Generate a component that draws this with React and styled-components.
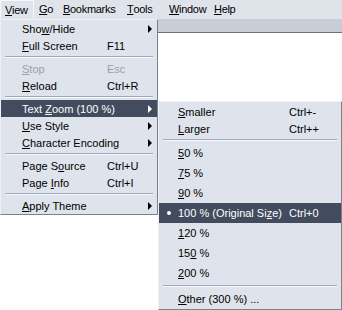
import React from 'react';
import styled, { createGlobalStyle, css } from 'styled-components';

const Global = createGlobalStyle`
  html, body { margin: 0; padding: 0; background: #fff; }
  body {
    font-family: "Liberation Sans", Arial, sans-serif;
    font-size: 11px;
    color: #000;
    overflow: hidden;
  }
`;

const Window = styled.div`
  position: relative;
  width: 342px;
  height: 310px;
  background: #fff;
  overflow: hidden;
`;

const MenuBar = styled.div`
  display: flex;
  height: 19px;
  background: #dfe3ea;
  letter-spacing: -0.3px;
`;

const BarItem = styled.div`
  display: flex;
  align-items: center;
  height: 18px;
  width: ${(p) => (p.$w ? `${p.$w}px` : 'auto')};
  box-sizing: border-box;
  padding: 0 0 0 4px;
  border-left: 1px solid transparent;
  border-right: 1px solid transparent;
  white-space: nowrap;
  ${(p) =>
    p.$active &&
    css`
      border-left-color: #f6f8fb;
      border-right-color: #f6f8fb;
      border-top: 1px solid #f6f8fb;
    `}
`;

const Toolbar = styled.div`
  height: 13px;
  background: #c8ced8;
  border-bottom: 1px solid #6c727c;
`;

const Menu = styled.div`
  position: absolute;
  left: ${(p) => p.$x}px;
  top: ${(p) => p.$y}px;
  width: ${(p) => p.$w}px;
  box-sizing: border-box;
  background: #dfe3eb;
  border: 1px solid;
  border-color: #eef1f5 #7b818c #7b818c #eef1f5;
  padding-top: ${(p) => p.$pt || 0}px;
  display: flex;
  flex-direction: column;
`;

const Row = styled.div`
  display: grid;
  grid-template-columns: ${(p) => p.$cols};
  align-items: center;
  height: ${(p) => p.$h || 17}px;
  white-space: nowrap;
  color: ${(p) => (p.$disabled ? '#9aa0aa' : p.$hl ? '#fff' : '#000')};
  background: ${(p) => (p.$hl ? '#434c5e' : 'transparent')};
`;

const Label = styled.span``;

const Shortcut = styled.span``;

const Key = styled.u`
  text-decoration: underline;
  text-underline-offset: 1px;
`;

const Arrow = styled.span`
  width: 0;
  height: 0;
  border-top: 4px solid transparent;
  border-bottom: 4px solid transparent;
  border-left: 4px solid ${(p) => (p.$hl ? '#fff' : '#000')};
`;

const Bullet = styled.span`
  justify-self: center;
  width: 4px;
  height: 4px;
  border-radius: 50%;
  background: ${(p) => (p.$hl ? '#fff' : '#000')};
  margin-left: 1px;
`;

const Sep = styled.div`
  height: 6px;
  display: flex;
  align-items: center;
  padding: 0 ${(p) => p.$inset || 4}px;
  &::after {
    content: '';
    flex: 1;
    height: 1px;
    background: #a2a9c2;
    border-bottom: 1px solid #f7f8fb;
  }
`;

const Empty = styled.span``;

function L({ text, k }) {
  if (k == null || k < 0) return <>{text}</>;
  return (
    <>
      {text.slice(0, k)}
      <Key>{text[k]}</Key>
      {text.slice(k + 1)}
    </>
  );
}

const MAIN_COLS = '21px minmax(85px, max-content) 1fr 9px';
const SUB_COLS = '19px minmax(111px, max-content) 1fr';

const mainItems = [
  { t: 'Show/Hide', k: 3, sub: true },
  { t: 'Full Screen', k: 0, s: 'F11' },
  { sep: true },
  { t: 'Stop', k: 0, s: 'Esc', dis: true },
  { t: 'Reload', k: 0, s: 'Ctrl+R' },
  { sep: true },
  { t: 'Text Zoom (100 %)', k: 5, sub: true, hl: true },
  { t: 'Use Style', k: 0, sub: true },
  { t: 'Character Encoding', k: 0, sub: true },
  { sep: true },
  { t: 'Page Source', k: 6, s: 'Ctrl+U' },
  { t: 'Page Info', k: 5, s: 'Ctrl+I' },
  { sep: true },
  { t: 'Apply Theme', k: 0, sub: true },
];

const subItems = [
  { t: 'Smaller', k: 0, s: 'Ctrl+-' },
  { t: 'Larger', k: 0, s: 'Ctrl++' },
  { sep: true },
  { t: '50 %', k: 0, h: 20 },
  { t: '75 %', k: 0, h: 20 },
  { t: '90 %', k: 0, h: 20 },
  { t: '100 % (Original Size)', k: 18, s: 'Ctrl+0', h: 20, hl: true, radio: true },
  { t: '120 %', k: 0, h: 20 },
  { t: '150 %', k: 2, h: 20 },
  { t: '200 %', k: 0, h: 20 },
  { sep: true },
  { t: 'Other (300 %) ...', k: 0, h: 20 },
];

const bar = [
  { t: 'View', k: 0, w: 34, active: true },
  { t: 'Go', k: 0, w: 24 },
  { t: 'Bookmarks', k: 0, w: 64 },
  { t: 'Tools', k: 0, w: 42 },
  { t: 'Window', k: 0, w: 45 },
  { t: 'Help', k: 0 },
];

export default function App() {
  return (
    <>
      <Global />
      <Window>
        <MenuBar>
          {bar.map((b) => (
            <BarItem key={b.t} $active={b.active} $w={b.w}>
              <L text={b.t} k={b.k} />
            </BarItem>
          ))}
        </MenuBar>
        <Toolbar />

        <Menu $x={0} $y={19} $w={158}>
          {mainItems.map((it, i) =>
            it.sep ? (
              <Sep key={i} $inset={4} />
            ) : (
              <Row key={i} $cols={MAIN_COLS} $hl={it.hl} $disabled={it.dis}>
                <Empty />
                <Label>
                  <L text={it.t} k={it.k} />
                </Label>
                <Shortcut>{it.s || ''}</Shortcut>
                {it.sub ? <Arrow $hl={it.hl} /> : <Empty />}
              </Row>
            )
          )}
        </Menu>

        <Menu $x={158} $y={101} $w={184} $pt={1}>
          {subItems.map((it, i) =>
            it.sep ? (
              <Sep key={i} $inset={4} />
            ) : (
              <Row key={i} $cols={SUB_COLS} $h={it.h} $hl={it.hl}>
                {it.radio ? <Bullet $hl={it.hl} /> : <Empty />}
                <Label>
                  <L text={it.t} k={it.k} />
                </Label>
                <Shortcut>{it.s || ''}</Shortcut>
              </Row>
            )
          )}
        </Menu>
      </Window>
    </>
  );
}
